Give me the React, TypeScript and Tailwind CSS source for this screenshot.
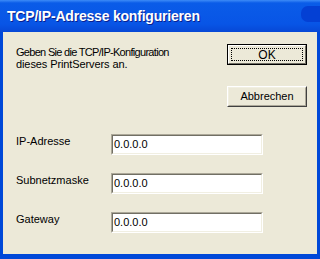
const font = "font-['Tahoma','Liberation_Sans',Arial,sans-serif]"

function Field({ label, value }: { label: string; value: string }) {
  return (
    <div className="flex items-start h-[21px]">
      <span className="w-[95px] pt-[1px] text-[11px] leading-[13px] text-black">{label}</span>
      <div className="w-[152px] h-[21px] border border-t-[#aca899] border-l-[#aca899] border-r-white border-b-white">
        <div className="h-full border border-t-[#716f64] border-l-[#716f64] border-r-[#f1efe2] border-b-[#f1efe2] bg-white pl-[1px] text-[11px] leading-[17px] text-black">
          {value}
        </div>
      </div>
    </div>
  )
}

export default function App() {
  return (
    <div className={`w-[320px] h-[259px] bg-[#0048d8] flex flex-col ${font}`}>
      <div className="relative h-[32px] shrink-0 flex items-center px-[7px] bg-[linear-gradient(to_bottom,#3d8bf7_0px,#0a5ce8_3px,#0855e6_24px,#0748d6_32px)]">
        <div className="absolute right-0 top-[6px] w-[19px] h-[16px] rounded-l-[7px] bg-[#0440d4]" />
        <span className="relative text-white font-bold text-[14px] tracking-[-0.2px] font-['Liberation_Sans',Arial,sans-serif] [text-shadow:1px_1px_0_#0a1f8f]">
          TCP/IP-Adresse konfigurieren
        </span>
      </div>
      <div className="flex-1 ml-[3px] mr-[3px] mb-[5px] bg-[#ece9d8] pt-[12px] pl-[13px] pr-[10px]">
        <div className="flex justify-between">
          <p className="mt-[2px] text-[11px] leading-[12px] text-black">
            <span className="tracking-[-0.7px]">Geben Sie die TCP/IP-Konfiguration</span>
            <br />
            <span className="tracking-[-0.1px]">dieses PrintServers an.</span>
          </p>
          <div className="flex flex-col gap-[21px] w-[80px]">
            <button className="h-[21px] border border-black bg-[#ece9d8]">
              <div className="h-full border border-t-white border-l-white border-r-[#716f64] border-b-[#716f64] p-[2px]">
                <div className="h-full border border-dotted border-black flex items-center justify-center text-[12px] leading-none">OK</div>
              </div>
            </button>
            <button className="h-[21px] border border-t-white border-l-white border-r-[#404040] border-b-[#404040] bg-[#ece9d8]">
              <div className="h-full border border-t-[#f1efe2] border-l-[#f1efe2] border-r-[#aca899] border-b-[#aca899] flex items-center justify-center text-[11px] leading-none">
                Abbrechen
              </div>
            </button>
          </div>
        </div>
        <div className="mt-[27px] flex flex-col gap-[18px]">
          <Field label="IP-Adresse" value="0.0.0.0" />
          <Field label="Subnetzmaske" value="0.0.0.0" />
          <Field label="Gateway" value="0.0.0.0" />
        </div>
      </div>
    </div>
  )
}
